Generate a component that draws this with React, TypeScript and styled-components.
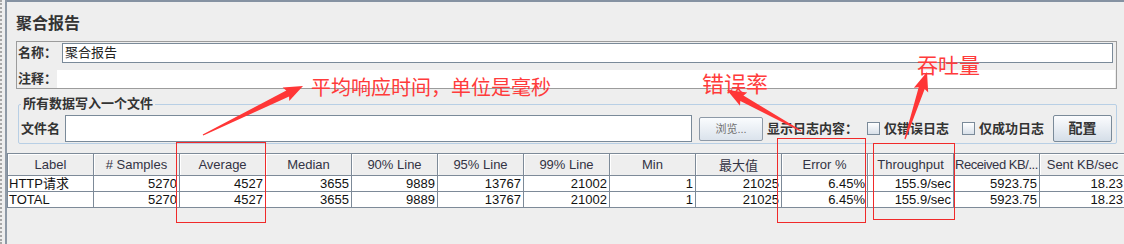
import styled, { createGlobalStyle } from "styled-components";

const GlobalStyle = createGlobalStyle`
  html, body {
    margin: 0;
    padding: 0;
    background: #eeeeee;
  }
`;

const cjk = `"Liberation Sans", "Noto Sans CJK SC", sans-serif`;

const columns = [
  "Label",
  "# Samples",
  "Average",
  "Median",
  "90% Line",
  "95% Line",
  "99% Line",
  "Min",
  "最大值",
  "Error %",
  "Throughput",
  "Received KB/...",
  "Sent KB/sec",
];

const values = ["5270", "4527", "3655", "9889", "13767", "21002", "1", "21025", "6.45%", "155.9/sec", "5923.75", "18.23"];

const rows = [
  { label: "HTTP请求", values },
  { label: "TOTAL", values },
];

// arrow as a tapered wedge, from tail to tip
const arrowPoints = (tx: number, ty: number, hx: number, hy: number) => {
  const len = Math.hypot(hx - tx, hy - ty);
  const dx = (hx - tx) / len;
  const dy = (hy - ty) / len;
  const nx = -dy;
  const ny = dx;
  const neckX = hx - dx * 17;
  const neckY = hy - dy * 17;
  const p = (x: number, y: number, w: number) => `${(x + nx * w).toFixed(1)},${(y + ny * w).toFixed(1)}`;
  return [
    p(tx, ty, 0.6),
    p(neckX, neckY, 3.2),
    p(neckX - dx * 2, neckY - dy * 2, 7.5),
    `${hx},${hy}`,
    p(neckX - dx * 2, neckY - dy * 2, -7.5),
    p(neckX, neckY, -3.2),
    p(tx, ty, -0.6),
  ].join(" ");
};

const arrows = [
  { tx: 203, ty: 135, hx: 303, hy: 86 },
  { tx: 801, ty: 131, hx: 727, hy: 90 },
  { tx: 905, ty: 139, hx: 927, hy: 72 },
];

const notes = [
  { text: "平均响应时间，单位是毫秒", x: 311, y: 74, size: 20 },
  { text: "错误率", x: 702, y: 69, size: 22 },
  { text: "吞吐量", x: 917, y: 51, size: 21 },
];

// red frames drawn over the table
const boxes = [
  { x: 176, y: 142, w: 90, h: 81 },
  { x: 777, y: 138, w: 89, h: 85 },
  { x: 873, y: 143, w: 82, h: 77 },
];

export default function App() {
  return (
    <>
      <GlobalStyle />
      <Frame>
        <LeftRail />
        <Main>
          <Title>聚合报告</Title>
          <NamePanel>
            <NameRow>
              <FieldLabel>名称：</FieldLabel>
              <NameInput>聚合报告</NameInput>
            </NameRow>
            <CommentRow>
              <FieldLabel>注释：</FieldLabel>
              <CommentArea />
            </CommentRow>
          </NamePanel>
          <FileSet>
            <Legend>所有数据写入一个文件</Legend>
            <FileRow>
              <FieldLabel>文件名</FieldLabel>
              <FileInput />
              <BrowseButton>浏览...</BrowseButton>
              <FieldLabel $gap={4}>显示日志内容：</FieldLabel>
              <CheckBox $gap={9} />
              <FieldLabel $gap={4}>仅错误日志</FieldLabel>
              <CheckBox $gap={13} />
              <FieldLabel $gap={4}>仅成功日志</FieldLabel>
              <ConfigButton>配置</ConfigButton>
            </FileRow>
          </FileSet>
          <Grid>
            <colgroup>
              {columns.map((c) => (
                <col key={c} style={{ width: 86 }} />
              ))}
            </colgroup>
            <thead>
              <tr>
                {columns.map((c) => (
                  <Head key={c} $tight={c.length > 12}>
                    {c}
                  </Head>
                ))}
              </tr>
            </thead>
            <tbody>
              {rows.map((r) => (
                <tr key={r.label}>
                  <Cell $left>{r.label}</Cell>
                  {r.values.map((v, i) => (
                    <Cell key={i}>{v}</Cell>
                  ))}
                </tr>
              ))}
            </tbody>
          </Grid>
        </Main>

        {boxes.map((b, i) => (
          <RedBox key={i} style={{ left: b.x, top: b.y, width: b.w, height: b.h }} />
        ))}
        <Arrows width="1124" height="244" viewBox="0 0 1124 244">
          {arrows.map((a, i) => (
            <polygon key={i} points={arrowPoints(a.tx, a.ty, a.hx, a.hy)} fill="#ff3636" />
          ))}
        </Arrows>
        {notes.map((n) => (
          <Note key={n.text} $size={n.size} style={{ left: n.x, top: n.y }}>
            {n.text}
          </Note>
        ))}
      </Frame>
    </>
  );
}

const Frame = styled.div`
  position: relative;
  width: 1124px;
  height: 244px;
  overflow: hidden;
  display: flex;
  background: #eeeeee;
  font-family: ${cjk};
`;

const LeftRail = styled.div`
  flex: none;
  width: 3px;
  height: 100%;
  border-left: 2px dotted #a8a8a8;
  border-right: 2px solid #8e99a6;
`;

const Main = styled.div`
  flex: none;
  width: 1117px;
  display: flex;
  flex-direction: column;
  border-top: 2px solid #8592a2;
`;

const Title = styled.div`
  padding: 12px 0 0 9px;
  height: 20px;
  line-height: 20px;
  font-size: 16px;
  font-weight: bold;
  color: #333333;
`;

const NamePanel = styled.div`
  margin: 7px 0 0 9px;
  width: 1097px;
  height: 46px;
  border: 1px solid #9c9c9c;
  padding: 0 1px 0 1px;
  display: flex;
  flex-direction: column;
`;

const NameRow = styled.div`
  display: flex;
  align-items: center;
  height: 20px;
  margin-top: 1px;
`;

const CommentRow = styled.div`
  display: flex;
  align-items: center;
  height: 18px;
  margin-top: 7px;
`;

const FieldLabel = styled.span<{ $gap?: number }>`
  flex: none;
  margin-left: ${({ $gap }) => $gap ?? 0}px;
  font-size: 13px;
  font-weight: bold;
  color: #333333;
  white-space: nowrap;
  line-height: 16px;
`;

const NameInput = styled.div`
  box-sizing: border-box;
  margin-left: 5px;
  width: 1051px;
  height: 20px;
  background: #ffffff;
  border: 1px solid #7a8a99;
  font-size: 13px;
  line-height: 18px;
  padding-left: 2px;
  color: #222222;
`;

const CommentArea = styled.div`
  width: 1058px;
  height: 18px;
  background: #ffffff;
`;

const FileSet = styled.fieldset`
  margin: 7px 0 0 11px;
  width: 1093px;
  padding: 3px 2px 1px 2px;
  border: 1px solid #b8cfe5;
  border-radius: 2px;
  min-inline-size: auto;
`;

const Legend = styled.legend`
  padding: 0 2px;
  font-size: 13px;
  font-weight: bold;
  line-height: 16px;
  color: #333333;
`;

const FileRow = styled.div`
  display: flex;
  align-items: center;
  height: 27px;
`;

const FileInput = styled.div`
  flex: none;
  box-sizing: border-box;
  margin-left: 5px;
  width: 627px;
  height: 27px;
  background: #ffffff;
  border: 1px solid #7a8a99;
`;

const BrowseButton = styled.div`
  flex: none;
  box-sizing: border-box;
  margin-left: 7px;
  width: 64px;
  height: 24px;
  border: 1px solid #8d99a7;
  border-radius: 2px;
  background: linear-gradient(#fafcfe, #dbe3ec);
  font-size: 11px;
  line-height: 22px;
  text-align: center;
  color: #707070;
`;

const CheckBox = styled.div<{ $gap: number }>`
  flex: none;
  box-sizing: border-box;
  margin-left: ${({ $gap }) => $gap}px;
  width: 13px;
  height: 13px;
  border: 1px solid #7a8a99;
  background: linear-gradient(#ffffff, #d8e0e9);
`;

const ConfigButton = styled.div`
  flex: none;
  box-sizing: border-box;
  margin-left: 9px;
  width: 59px;
  height: 27px;
  border: 1px solid #7a8a99;
  border-radius: 2px;
  background: linear-gradient(#fbfcfe, #d5dee8);
  font-size: 14px;
  font-weight: bold;
  line-height: 25px;
  text-align: center;
  color: #333333;
`;

const Grid = styled.table`
  margin-top: 9px;
  border-collapse: collapse;
  table-layout: fixed;
  width: 1118px;
  font-family: ${cjk};
  font-size: 13px;
`;

const Head = styled.th<{ $tight?: boolean }>`
  height: 21px;
  padding: 0;
  border: 1px solid #7d8a98;
  background: #eeeeee;
  box-shadow: inset 1px 1px 0 #ffffff;
  font-weight: normal;
  color: #333344;
  text-align: center;
  white-space: nowrap;
  overflow: hidden;
  letter-spacing: ${({ $tight }) => ($tight ? "-0.45px" : "0")};
`;

const Cell = styled.td<{ $left?: boolean }>`
  height: 15px;
  padding: 0 2px 0 1px;
  border: 1px solid #7d8a98;
  background: #ffffff;
  color: #111111;
  line-height: 15px;
  text-align: ${({ $left }) => ($left ? "left" : "right")};
  white-space: nowrap;
  overflow: hidden;
`;

const RedBox = styled.div`
  position: absolute;
  z-index: 2;
  box-sizing: border-box;
  border: 1px solid #f02a2a;
  pointer-events: none;
`;

const Arrows = styled.svg`
  position: absolute;
  z-index: 3;
  left: 0;
  top: 0;
  pointer-events: none;
`;

const Note = styled.div<{ $size: number }>`
  position: absolute;
  z-index: 3;
  font-family: "Noto Sans CJK SC", sans-serif;
  font-size: ${({ $size }) => $size}px;
  line-height: 26px;
  color: #ff3b3b;
  white-space: nowrap;
`;
